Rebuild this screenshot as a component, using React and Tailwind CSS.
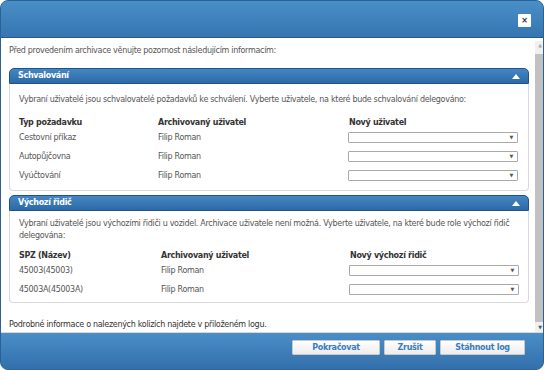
const font = { fontFamily: '"DejaVu Sans", Verdana, sans-serif' };

const Select = () => (
  <div className="relative h-[11px] w-[170px] border border-[#a9a9a9] bg-white rounded-[1px]">
    <span className="absolute right-[4px] top-[2px] text-[5px] leading-none text-[#555]">▼</span>
  </div>
);

const SectionHeader = ({ title }) => (
  <div className="flex h-[16px] items-center justify-between rounded-t-[5px] border border-[#1f5288] bg-gradient-to-b from-[#4487c2] to-[#2c6aa6] px-[8px]">
    <span className="text-[8px] font-bold text-white">{title}</span>
    <span className="h-0 w-0 border-x-[4px] border-b-[5px] border-x-transparent border-b-white" />
  </div>
);

const Row = ({ a, b, bold, c, colB = 'w-[191px]', colA = 'w-[139px]' }) => (
  <div className={`flex items-center ${bold ? 'h-[11px]' : 'h-[19px]'}`}>
    <span className={`${colA} ${bold ? 'font-bold text-[#333]' : ''}`}>{a}</span>
    <span className={`${colB} ${bold ? 'font-bold text-[#333]' : ''}`}>{b}</span>
    {c}
  </div>
);

export default function App() {
  const rows1 = ['Cestovní příkaz', 'Autopůjčovna', 'Vyúčtování'];
  const rows2 = ['45003(45003)', '45003A(45003A)'];
  return (
    <div style={font} className="flex h-[370px] w-[544px] flex-col overflow-hidden rounded-[8px] border border-[#2a6296] bg-[#3a7cb6] text-[8px] tracking-[-0.3px] text-[#555]">
      {/* header */}
      <div className="flex h-[37px] shrink-0 items-start justify-end border-b border-[#24598c] bg-gradient-to-b from-[#4a8ec7] to-[#3576b1] pr-[12px] pt-[13px]">
        <div className="flex h-[13px] w-[13px] items-center justify-center rounded-[1px] bg-white text-[8px] font-bold leading-none text-[#333]">×</div>
      </div>

      {/* body */}
      <div className="flex min-h-0 flex-1 bg-white">
        <div className="flex-1 pl-[8px] pr-[6px]">
          <p className="pt-[7px] h-[30px]">Před provedením archivace věnujte pozornost následujícím informacím:</p>

          <SectionHeader title="Schvalování" />
          <div className="h-[107px] rounded-b-[4px] border border-t-0 border-[#dadada] px-[9px] pt-[10px]">
            <p className="mb-[11px]">Vybraní uživatelé jsou schvalovatelé požadavků ke schválení. Vyberte uživatele, na které bude schvalování delegováno:</p>
            <Row a="Typ požadavku" b="Archivovaný uživatel" bold c={<span className="font-bold text-[#333]">Nový uživatel</span>} />
            {rows1.map(r => (
              <Row key={r} a={r} b="Filip Roman" colB="w-[190px]" c={<Select />} />
            ))}
          </div>

          <div className="mt-[4px]">
            <SectionHeader title="Výchozí řidič" />
          </div>
          <div className="h-[92px] rounded-b-[4px] border border-t-0 border-[#dadada] px-[9px] pt-[7px]">
            <p className="mb-[8px] leading-[12px]">Vybraní uživatelé jsou výchozími řidiči u vozidel. Archivace uživatele není možná. Vyberte uživatele, na které bude role výchozí řidič delegována:</p>
            <Row a="SPZ (Název)" b="Archivovaný uživatel" bold colA="w-[142px]" colB="w-[189px]" c={<span className="font-bold text-[#333]">Nový výchozí řidič</span>} />
            {rows2.map(r => (
              <Row key={r} a={r} b="Filip Roman" colA="w-[142px]" colB="w-[188px]" c={<Select />} />
            ))}
          </div>

          <p className="pt-[16px] text-[#333]">Podrobné informace o nalezených kolizích najdete v přiloženém logu.</p>
        </div>

        {/* scrollbar */}
        <div className="mr-[2px] mt-[3px] flex w-[10px] flex-col items-center bg-[#f0f0f0]">
          <span className="mt-[2px] text-[5px] leading-none text-[#aaa]">▲</span>
          <div className="mt-[6px] h-[268px] w-[10px] bg-[#c1c1c1]" />
          <div className="flex-1" />
          <span className="mb-[2px] text-[5px] leading-none text-[#555]">▼</span>
        </div>
      </div>

      {/* footer */}
      <div className="flex h-[37px] shrink-0 items-start justify-end gap-[4px] border-t border-[#d8d8d8] bg-gradient-to-b from-[#4a8ec7] to-[#3370ab] pr-[18px] pt-[7px]">
        {['Pokračovat', 'Zrušit', 'Stáhnout log'].map((t, i) => (
          <button
            key={t}
            className={`h-[15px] rounded-[1px] border border-[#c9c9c9] bg-gradient-to-b from-white to-[#ececec] text-[8px] font-bold text-[#3b7cc2] ${['w-[88px]', 'w-[52px]', 'w-[85px]'][i]}`}
          >
            {t}
          </button>
        ))}
      </div>
    </div>
  );
}
